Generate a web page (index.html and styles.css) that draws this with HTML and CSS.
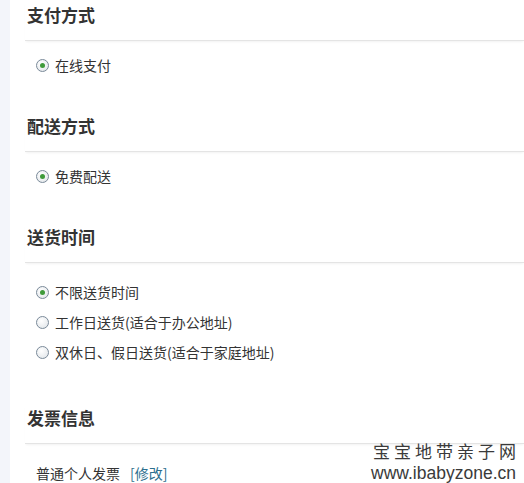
FILE: index.html
```html
<!DOCTYPE html>
<html lang="zh">
<head>
<meta charset="utf-8">
<title>结算信息</title>
<link rel="stylesheet" href="styles.css">
</head>
<body>
<div class="page">
  <aside class="strip"></aside>
  <main class="main">
    <section class="sec">
      <h2 class="sec-title">支付方式</h2>
      <div class="opts">
        <label class="opt"><span class="radio on"></span>在线支付</label>
      </div>
    </section>
    <section class="sec">
      <h2 class="sec-title">配送方式</h2>
      <div class="opts">
        <label class="opt"><span class="radio on"></span>免费配送</label>
      </div>
    </section>
    <section class="sec">
      <h2 class="sec-title">送货时间</h2>
      <div class="opts opts-wide">
        <label class="opt"><span class="radio on"></span>不限送货时间</label>
        <label class="opt"><span class="radio"></span>工作日送货(适合于办公地址)</label>
        <label class="opt"><span class="radio"></span>双休日、假日送货(适合于家庭地址)</label>
      </div>
    </section>
    <section class="sec sec-last">
      <h2 class="sec-title">发票信息</h2>
      <div class="opts opts-wide">
        <div class="invoice">普通个人发票<a class="edit" href="#">[修改]</a></div>
      </div>
    </section>
  </main>
  <div class="watermark">
    <div class="wm-cn">宝宝地带亲子网</div>
    <div class="wm-en">www.ibabyzone.cn</div>
  </div>
</div>
</body>
</html>
```
FILE: styles.css
```css
html, body {
  margin: 0;
  padding: 0;
  background: #fff;
}
body {
  font-family: "Noto Sans CJK SC", "Liberation Sans", sans-serif;
  color: #333;
  overflow: hidden;
}
.page {
  display: flex;
  position: relative;
  height: 483px;
}
.strip {
  width: 10px;
  flex: none;
  background: #f3f5fa;
}
.main {
  flex: 1;
  padding-left: 15px;
}
.sec {
  margin-bottom: 31px;
}
.sec-last {
  padding-top: 5px;
}
.sec-title {
  margin: 0;
  padding: 0 0 10px 2px;
  height: 30px;
  line-height: 30px;
  font-size: 17px;
  font-weight: bold;
  color: #333;
  border-bottom: 1px solid #e4e4e4;
  box-shadow: 0 2px 2px -1px #f2f2f2;
}
.opts {
  padding: 9px 0 0 11px;
  display: flex;
  flex-direction: column;
}
.opts-wide {
  padding-top: 14px;
}
.opt {
  display: flex;
  align-items: center;
  height: 30px;
  font-size: 14px;
  color: #333;
}
.radio {
  width: 11px;
  height: 11px;
  border: 1px solid #7a8a99;
  border-radius: 50%;
  margin-right: 6px;
  background: radial-gradient(circle at 40% 35%, #fff 0%, #e8ebee 70%, #d4d8dc 100%);
  position: relative;
  box-sizing: content-box;
}
.radio.on::after {
  content: "";
  position: absolute;
  left: 3px;
  top: 3px;
  width: 5px;
  height: 5px;
  border-radius: 50%;
  background: #3f9a3a;
}
.invoice {
  height: 30px;
  line-height: 30px;
  font-size: 14px;
  color: #333;
}
.edit {
  margin-left: 10px;
  color: #2d6f8e;
  text-decoration: none;
}
.watermark {
  position: absolute;
  right: 8px;
  bottom: -2px;
  text-align: right;
  color: #3a3a3a;
  line-height: 23px;
}
.wm-cn {
  font-size: 17px;
  letter-spacing: 4px;
  margin-right: -4px;
}
.wm-en {
  font-family: "Liberation Sans", "DejaVu Sans", sans-serif;
  font-size: 17.5px;
}
```
